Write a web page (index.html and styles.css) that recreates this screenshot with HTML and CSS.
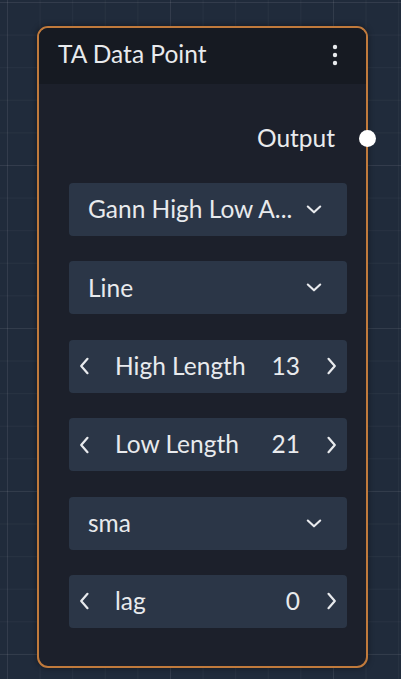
FILE: index.html
```html
<!DOCTYPE html>
<html>
<head>
<meta charset="utf-8">
<link rel="stylesheet" href="styles.css">
</head>
<body>
<div class="canvas">
  <div class="node">
    <div class="node-header">
      <span class="title">TA Data Point</span>
      <svg class="menu" width="6" height="22" viewBox="0 0 6 22"><circle cx="3" cy="3" r="2.2" fill="#e8eaed"/><circle cx="3" cy="11" r="2.2" fill="#e8eaed"/><circle cx="3" cy="19" r="2.2" fill="#e8eaed"/></svg>
    </div>
    <div class="node-body">
      <div class="output-row">
        <span class="output-label">Output</span>
        <span class="handle"></span>
      </div>
      <div class="fields">
        <div class="field select">
          <span class="label">Gann High Low A...</span>
          <svg class="chev" width="16" height="9" viewBox="0 0 16 9"><path d="M1.8 1.5 L8 7.3 L14.2 1.5" fill="none" stroke="#e8eaed" stroke-width="2.1" stroke-linecap="round" stroke-linejoin="round"/></svg>
        </div>
        <div class="field select">
          <span class="label">Line</span>
          <svg class="chev" width="16" height="9" viewBox="0 0 16 9"><path d="M1.8 1.5 L8 7.3 L14.2 1.5" fill="none" stroke="#e8eaed" stroke-width="2.1" stroke-linecap="round" stroke-linejoin="round"/></svg>
        </div>
        <div class="field number">
          <svg class="arrow" width="12" height="18" viewBox="0 0 12 18"><path d="M9.5 1.8 L3.2 9 L9.5 16.2" fill="none" stroke="#e8eaed" stroke-width="2.2" stroke-linecap="round" stroke-linejoin="round"/></svg>
          <span class="label">High Length</span>
          <span class="value">13</span>
          <svg class="arrow" width="12" height="18" viewBox="0 0 12 18"><path d="M2.5 1.8 L8.8 9 L2.5 16.2" fill="none" stroke="#e8eaed" stroke-width="2.2" stroke-linecap="round" stroke-linejoin="round"/></svg>
        </div>
        <div class="field number">
          <svg class="arrow" width="12" height="18" viewBox="0 0 12 18"><path d="M9.5 1.8 L3.2 9 L9.5 16.2" fill="none" stroke="#e8eaed" stroke-width="2.2" stroke-linecap="round" stroke-linejoin="round"/></svg>
          <span class="label">Low Length</span>
          <span class="value">21</span>
          <svg class="arrow" width="12" height="18" viewBox="0 0 12 18"><path d="M2.5 1.8 L8.8 9 L2.5 16.2" fill="none" stroke="#e8eaed" stroke-width="2.2" stroke-linecap="round" stroke-linejoin="round"/></svg>
        </div>
        <div class="field select">
          <span class="label">sma</span>
          <svg class="chev" width="16" height="9" viewBox="0 0 16 9"><path d="M1.8 1.5 L8 7.3 L14.2 1.5" fill="none" stroke="#e8eaed" stroke-width="2.1" stroke-linecap="round" stroke-linejoin="round"/></svg>
        </div>
        <div class="field number">
          <svg class="arrow" width="12" height="18" viewBox="0 0 12 18"><path d="M9.5 1.8 L3.2 9 L9.5 16.2" fill="none" stroke="#e8eaed" stroke-width="2.2" stroke-linecap="round" stroke-linejoin="round"/></svg>
          <span class="label">lag</span>
          <span class="value">0</span>
          <svg class="arrow" width="12" height="18" viewBox="0 0 12 18"><path d="M2.5 1.8 L8.8 9 L2.5 16.2" fill="none" stroke="#e8eaed" stroke-width="2.2" stroke-linecap="round" stroke-linejoin="round"/></svg>
        </div>
      </div>
    </div>
  </div>
</div>
</body>
</html>
```

FILE: styles.css
```css
html, body {
  margin: 0;
  padding: 0;
}
body {
  width: 401px;
  height: 679px;
  overflow: hidden;
  font-family: Lato, "Noto Sans", sans-serif;
  color: #e8eaed;
  background-color: #202b3b;
  background-image:
    linear-gradient(to right, rgba(255,255,255,0.05) 1px, transparent 1px),
    linear-gradient(to bottom, rgba(255,255,255,0.05) 1px, transparent 1px),
    linear-gradient(to right, rgba(255,255,255,0.035) 1px, transparent 1px),
    linear-gradient(to bottom, rgba(255,255,255,0.035) 1px, transparent 1px);
  background-size: 163px 163px, 163px 163px, 32.6px 32.6px, 32.6px 32.6px;
  background-position: 7px 2px, 7px 2px, 7px 2px, 7px 2px;
}
.canvas {
  padding: 26px 0 0 37px;
}
.node {
  width: 327px;
  height: 638px;
  border: 2px solid #c07a3c;
  border-radius: 11px;
  background: #1c202b;
  box-shadow: 0 0 6px rgba(0,0,0,0.45);
  display: flex;
  flex-direction: column;
}
.node-header {
  height: 56px;
  background: #161a22;
  border-radius: 9px 9px 0 0;
  display: flex;
  align-items: center;
  justify-content: space-between;
  padding: 0 28px 0 19px;
  flex-shrink: 0;
}
.title {
  font-size: 24.5px;
  line-height: 1;
  margin-top: -3px;
}
.menu {
  display: block;
  margin-top: -2px;
}
.node-body {
  display: flex;
  flex-direction: column;
}
.output-row {
  display: flex;
  align-items: center;
  justify-content: flex-end;
  height: 28px;
  margin-top: 40px;
  margin-bottom: 31px;
  position: relative;
}
.output-label {
  font-size: 24.5px;
  line-height: 1;
  margin-right: 31px;
}
.handle {
  position: absolute;
  right: -10px;
  top: 50%;
  width: 17px;
  height: 17px;
  margin-top: -8px;
  border-radius: 50%;
  background: #ffffff;
}
.fields {
  display: flex;
  flex-direction: column;
  gap: 25.4px;
  padding: 0 19px 0 30px;
}
.field {
  height: 53px;
  border-radius: 4px;
  background: #2b3647;
  display: flex;
  align-items: center;
  font-size: 24.5px;
  line-height: 1;
}
.select {
  padding: 0 25px 0 19px;
  justify-content: space-between;
}
.number {
  padding: 0 9px 0 9px;
}
.number .label {
  margin-left: 25px;
  flex: 1;
}
.number .value {
  margin-right: 26px;
}
.arrow, .chev {
  display: block;
  flex-shrink: 0;
}
.label {
  white-space: nowrap;
}
```
